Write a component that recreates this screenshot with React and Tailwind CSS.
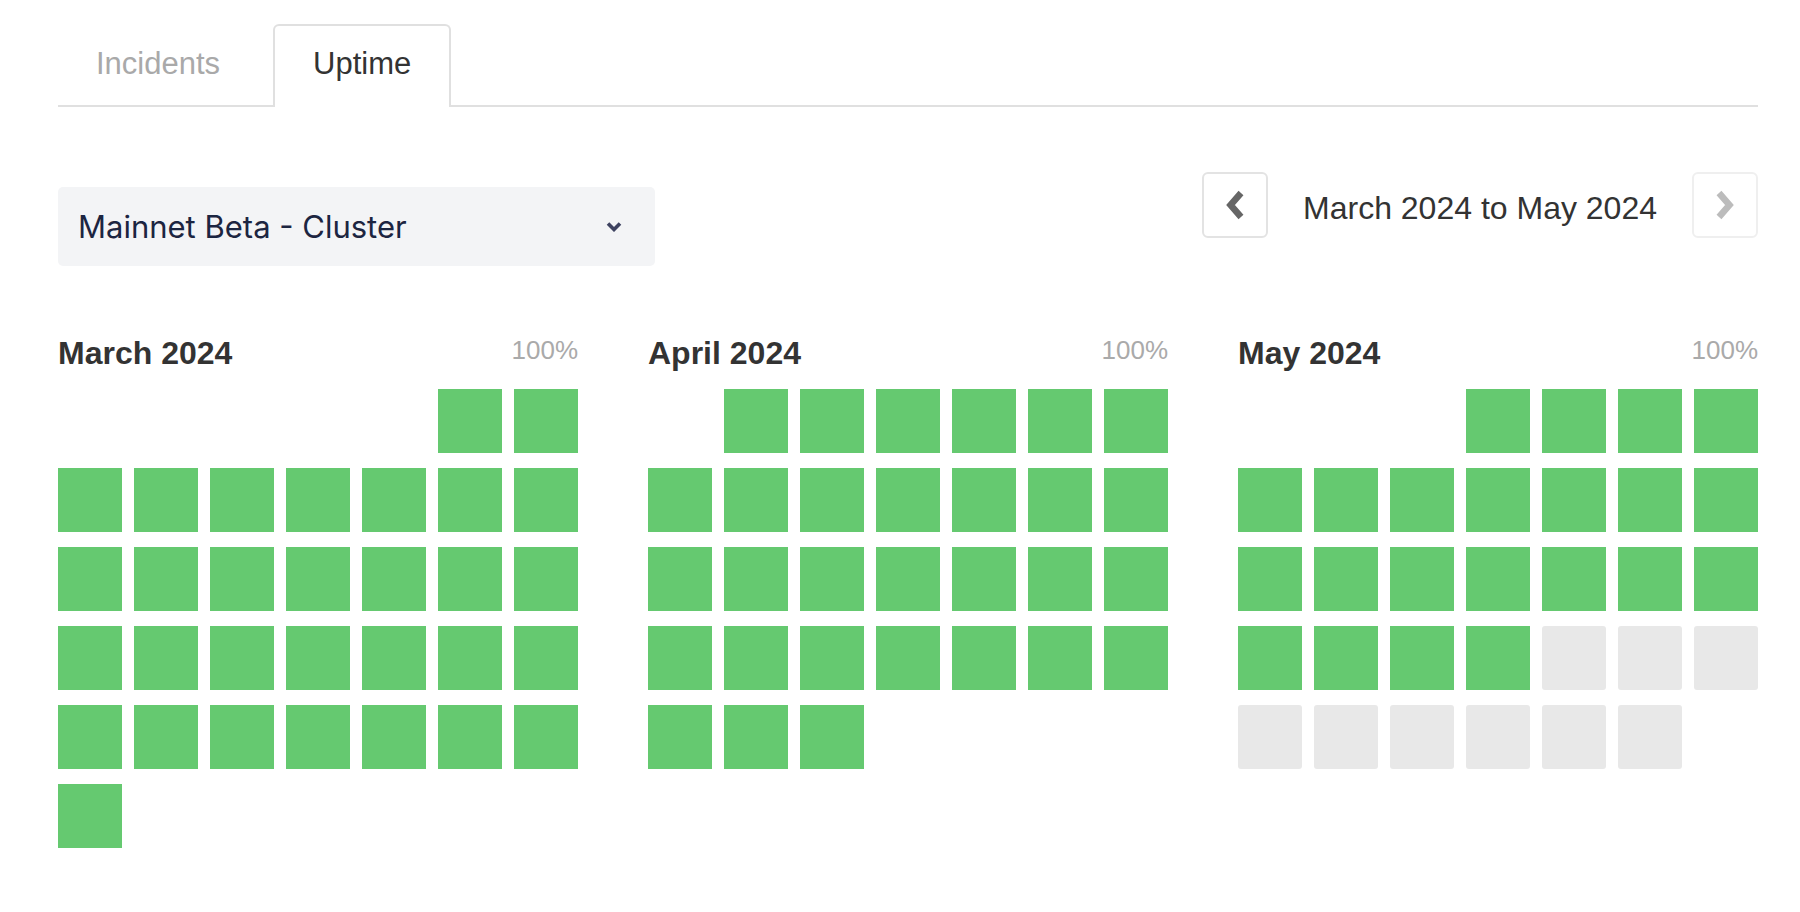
const sans = { fontFamily: '"Liberation Sans", Arial, sans-serif' };

// offset = weekday of the 1st (Sun = 0), up = days with data
const months = [
    { name: 'March 2024', offset: 5, days: 31, up: 31 },
    { name: 'April 2024', offset: 1, days: 30, up: 30 },
    { name: 'May 2024', offset: 3, days: 31, up: 22 },
];

const Chevron = ({ dir }) => (
    <svg width="22" height="34" viewBox="0 0 22 34" fill="none" className="shrink-0">
        <path
            d={dir === 'left' ? 'M17 5 L6.5 17 L17 29' : 'M5 5 L15.5 17 L5 29'}
            stroke="currentColor"
            strokeWidth="6.5"
            strokeLinejoin="miter"
        />
    </svg>
);

const MonthCalendar = ({ month }) => {
    const blanks = Array.from({ length: month.offset });
    const days = Array.from({ length: month.days }, (_, i) => i + 1);

    return (
        <div className="w-[520px]">
            <div className="flex items-start justify-between leading-none">
                <h3 className="text-[32px] font-bold text-[#333333] leading-none -mt-[2px]">{month.name}</h3>
                <span className="text-[26px] text-[#aaaaaa] leading-none -mt-[2px]">100%</span>
            </div>
            <div className="grid grid-cols-7 gap-x-[12px] gap-y-[15px] mt-[20px]">
                {blanks.map((_, i) => (
                    <div key={'b' + i} className="h-[64px]"></div>
                ))}
                {days.map((d) => (
                    <div
                        key={d}
                        className={d <= month.up ? 'h-[64px] bg-[#65c970]' : 'h-[64px] bg-[#e8e8e8] rounded-[3px]'}
                    ></div>
                ))}
            </div>
        </div>
    );
};

const App = () => {
    return (
        <div className="bg-white min-h-screen pt-[24px]" style={sans}>
            <div className="ml-[58px] w-[1700px]">
                {/* Tabs */}
                <div className="flex items-end border-b-2 border-[#e0e0e0]">
                    <div className="h-[83px] px-[36px] pt-[22px] border-2 border-transparent text-[31px] leading-none text-[#a9a9a9] -mb-[2px]">
                        Incidents
                    </div>
                    <div className="ml-[15px] h-[83px] px-[38px] pt-[22px] border-2 border-b-0 border-[#e0e0e0] rounded-t-[6px] bg-white text-[31px] leading-none text-[#333333] -mb-[2px]">
                        Uptime
                    </div>
                </div>

                {/* Controls */}
                <div className="flex items-start justify-between mt-[65px]">
                    <div className="mt-[15px] w-[597px] h-[79px] bg-[#f3f4f6] rounded-[5px] flex items-center justify-between pl-[20px] pr-[33px]">
                        <span
                            className="text-[31px] text-[#1c2541] leading-none"
                            style={{ fontFamily: 'Inter, "Liberation Sans", sans-serif' }}
                        >
                            Mainnet Beta - Cluster
                        </span>
                        <svg width="16" height="11" viewBox="0 0 16 11" fill="none" className="text-[#3d4260]">
                            <path d="M2 2.5 L8 8.5 L14 2.5" stroke="currentColor" strokeWidth="3.6" />
                        </svg>
                    </div>

                    <div className="flex items-center">
                        <button className="w-[66px] h-[66px] rounded-[6px] border-2 border-[#e3e3e3] flex items-center justify-center text-[#666666]">
                            <Chevron dir="left" />
                        </button>
                        <span className="mx-[35px] text-[32px] text-[#333333] leading-none pt-[6px]">
                            March 2024 to May 2024
                        </span>
                        <button className="w-[66px] h-[66px] rounded-[6px] border-2 border-[#efefef] flex items-center justify-center text-[#bcbcbc]">
                            <Chevron dir="right" />
                        </button>
                    </div>
                </div>

                {/* Calendars */}
                <div className="flex justify-between mt-[73px]">
                    {months.map((m) => (
                        <MonthCalendar key={m.name} month={m} />
                    ))}
                </div>
            </div>
        </div>
    );
};

export default App;
